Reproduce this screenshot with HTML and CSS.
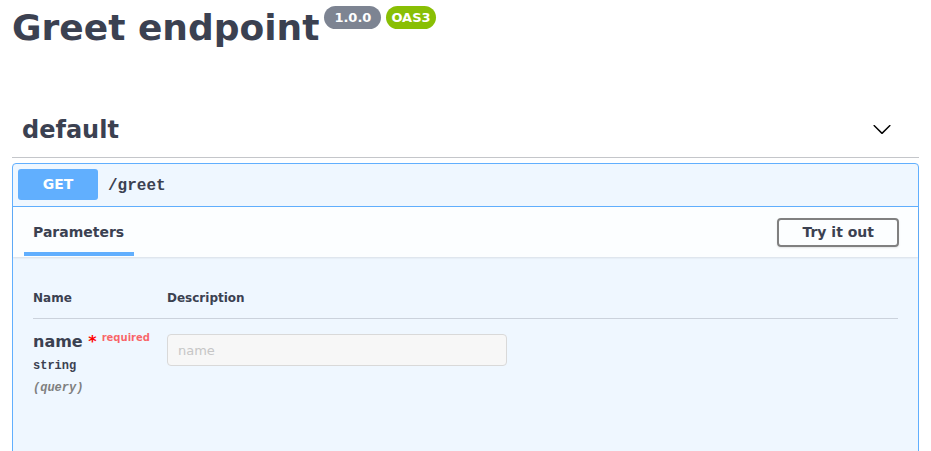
FILE: index.html
```html
<!DOCTYPE html>
<html lang="en">
<head>
<meta charset="utf-8">
<title>Greet endpoint</title>
<link rel="stylesheet" href="styles.css">
</head>
<body>
<div class="wrapper">
  <div class="title-row">
    <h2 class="title">Greet endpoint</h2>
    <span class="badge badge-version">1.0.0</span>
    <span class="badge badge-oas">OAS3</span>
  </div>

  <div class="tag-header">
    <h3 class="tag-name">default</h3>
    <svg class="chevron" width="20" height="20" viewBox="0 0 20 20" aria-hidden="true">
      <path d="M17.418 6.109c.272-.268.709-.268.979 0s.271.701 0 .969l-7.908 7.83c-.27.268-.707.268-.979 0l-7.908-7.83c-.27-.268-.27-.701 0-.969.271-.268.709-.268.979 0L10 13.25l7.418-7.141z"/>
    </svg>
  </div>

  <div class="opblock">
    <div class="summary">
      <span class="method">GET</span>
      <span class="path">/greet</span>
    </div>
    <div class="section-header">
      <div class="tab">Parameters</div>
      <button class="btn-try">Try it out</button>
    </div>
    <div class="params">
      <div class="param-table">
        <div class="th th-name">Name</div>
        <div class="th th-desc">Description</div>
        <div class="td td-name">
          <div class="param-name">name<span class="star">&nbsp;*</span><span class="required">required</span></div>
          <div class="param-type">string</div>
          <div class="param-in">(query)</div>
        </div>
        <div class="td td-desc">
          <input class="param-input" type="text" placeholder="name">
        </div>
      </div>
    </div>
  </div>
</div>
</body>
</html>
```
FILE: styles.css
```css
* { box-sizing: border-box; }

html, body {
  margin: 0;
  padding: 0;
  background: #ffffff;
  font-family: "DejaVu Sans", sans-serif;
  color: #3b4151;
  overflow: hidden;
}

.wrapper {
  padding: 0 12px;
}

.title-row {
  display: flex;
  align-items: flex-start;
  padding-top: 6px;
}

.title {
  margin: 1px 0 0 0;
  font-size: 36px;
  line-height: 42px;
  font-weight: 700;
  color: #3b4151;
}

.badge {
  display: inline-block;
  height: 23px;
  line-height: 23px;
  border-radius: 57px;
  color: #ffffff;
  font-size: 13px;
  font-weight: 700;
}

.badge-version {
  background: #7d8492;
  margin-left: 5px;
  padding: 0 10px;
}

.badge-oas {
  background: #89bf04;
  margin-left: 5px;
  padding: 0 5px;
}

.tag-header {
  margin-top: 52px;
  height: 57px;
  display: flex;
  align-items: center;
  justify-content: space-between;
  padding: 1px 27px 0 10px;
  border-bottom: 1px solid rgba(59, 65, 81, 0.3);
}

.tag-name {
  margin: 0;
  font-size: 24px;
  line-height: 28px;
  font-weight: 700;
  color: #3b4151;
}

.chevron {
  fill: #000000;
  display: block;
  margin-top: -1px;
}

.opblock {
  margin-top: 5px;
  border: 1px solid #61affe;
  border-radius: 4px;
  background: #eff7ff;
  min-height: 320px;
}

.summary {
  display: flex;
  align-items: flex-start;
  padding: 5px;
  height: 43px;
  border-bottom: 1px solid #61affe;
}

.method {
  width: 80px;
  height: 31px;
  line-height: 31px;
  text-align: center;
  background: #61affe;
  border-radius: 3px;
  color: #ffffff;
  font-size: 14px;
  font-weight: 700;
}

.path {
  padding: 2px 10px 0 10px;
  line-height: 31px;
  font-family: "Liberation Mono", monospace;
  font-size: 16px;
  font-weight: 700;
  color: #3b4151;
}

.section-header {
  display: flex;
  align-items: center;
  justify-content: space-between;
  height: 50px;
  padding: 0 19px 0 11px;
  background: rgba(255, 255, 255, 0.8);
  box-shadow: 0 1px 2px rgba(0, 0, 0, 0.1);
}

.tab {
  align-self: stretch;
  display: flex;
  align-items: center;
  padding: 5px 10px 0 9px;
  margin-bottom: 1px;
  border-bottom: 4px solid #61affe;
  font-size: 14px;
  font-weight: 700;
  color: #3b4151;
}

.btn-try {
  height: 29px;
  padding: 0 23px;
  border: 2px solid #808080;
  border-radius: 4px;
  background: transparent;
  font-family: "DejaVu Sans", sans-serif;
  font-size: 14px;
  font-weight: 700;
  color: #3b4151;
  box-shadow: 0 1px 2px rgba(0, 0, 0, 0.1);
}

.params {
  padding: 20px 20px 20px 20px;
}

.param-table {
  display: grid;
  grid-template-columns: 134px 1fr;
}

.th {
  padding: 14px 0 13px 0;
  font-size: 12px;
  line-height: 14px;
  font-weight: 700;
  color: #3b4151;
  border-bottom: 1px solid rgba(59, 65, 81, 0.2);
}

.td {
  padding-top: 10px;
}

.param-name {
  font-size: 16px;
  line-height: 18.6px;
  font-weight: 700;
  color: #3b4151;
}

.star {
  color: #ff0000;
}

.required {
  font-size: 10px;
  vertical-align: 6px;
  padding: 0 5px;
  color: rgba(255, 0, 0, 0.6);
}

.param-type {
  margin-top: 7px;
  font-family: "Liberation Mono", monospace;
  font-size: 12px;
  line-height: 14px;
  font-weight: 700;
  color: #3b4151;
}

.param-in {
  margin-top: 8px;
  font-family: "Liberation Mono", monospace;
  font-size: 12px;
  line-height: 14px;
  font-style: italic;
  font-weight: 700;
  color: #808080;
}

.td-desc {
  padding-top: 15px;
}

.param-input {
  display: block;
  width: 340px;
  height: 32px;
  padding: 0 10px;
  background: #f7f7f7;
  border: 1px solid #d9d9d9;
  border-radius: 4px;
  font-family: "DejaVu Sans", sans-serif;
  font-size: 13px;
  color: #3b4151;
  outline: none;
}

.param-input::placeholder {
  color: #c6c6c6;
}
```
